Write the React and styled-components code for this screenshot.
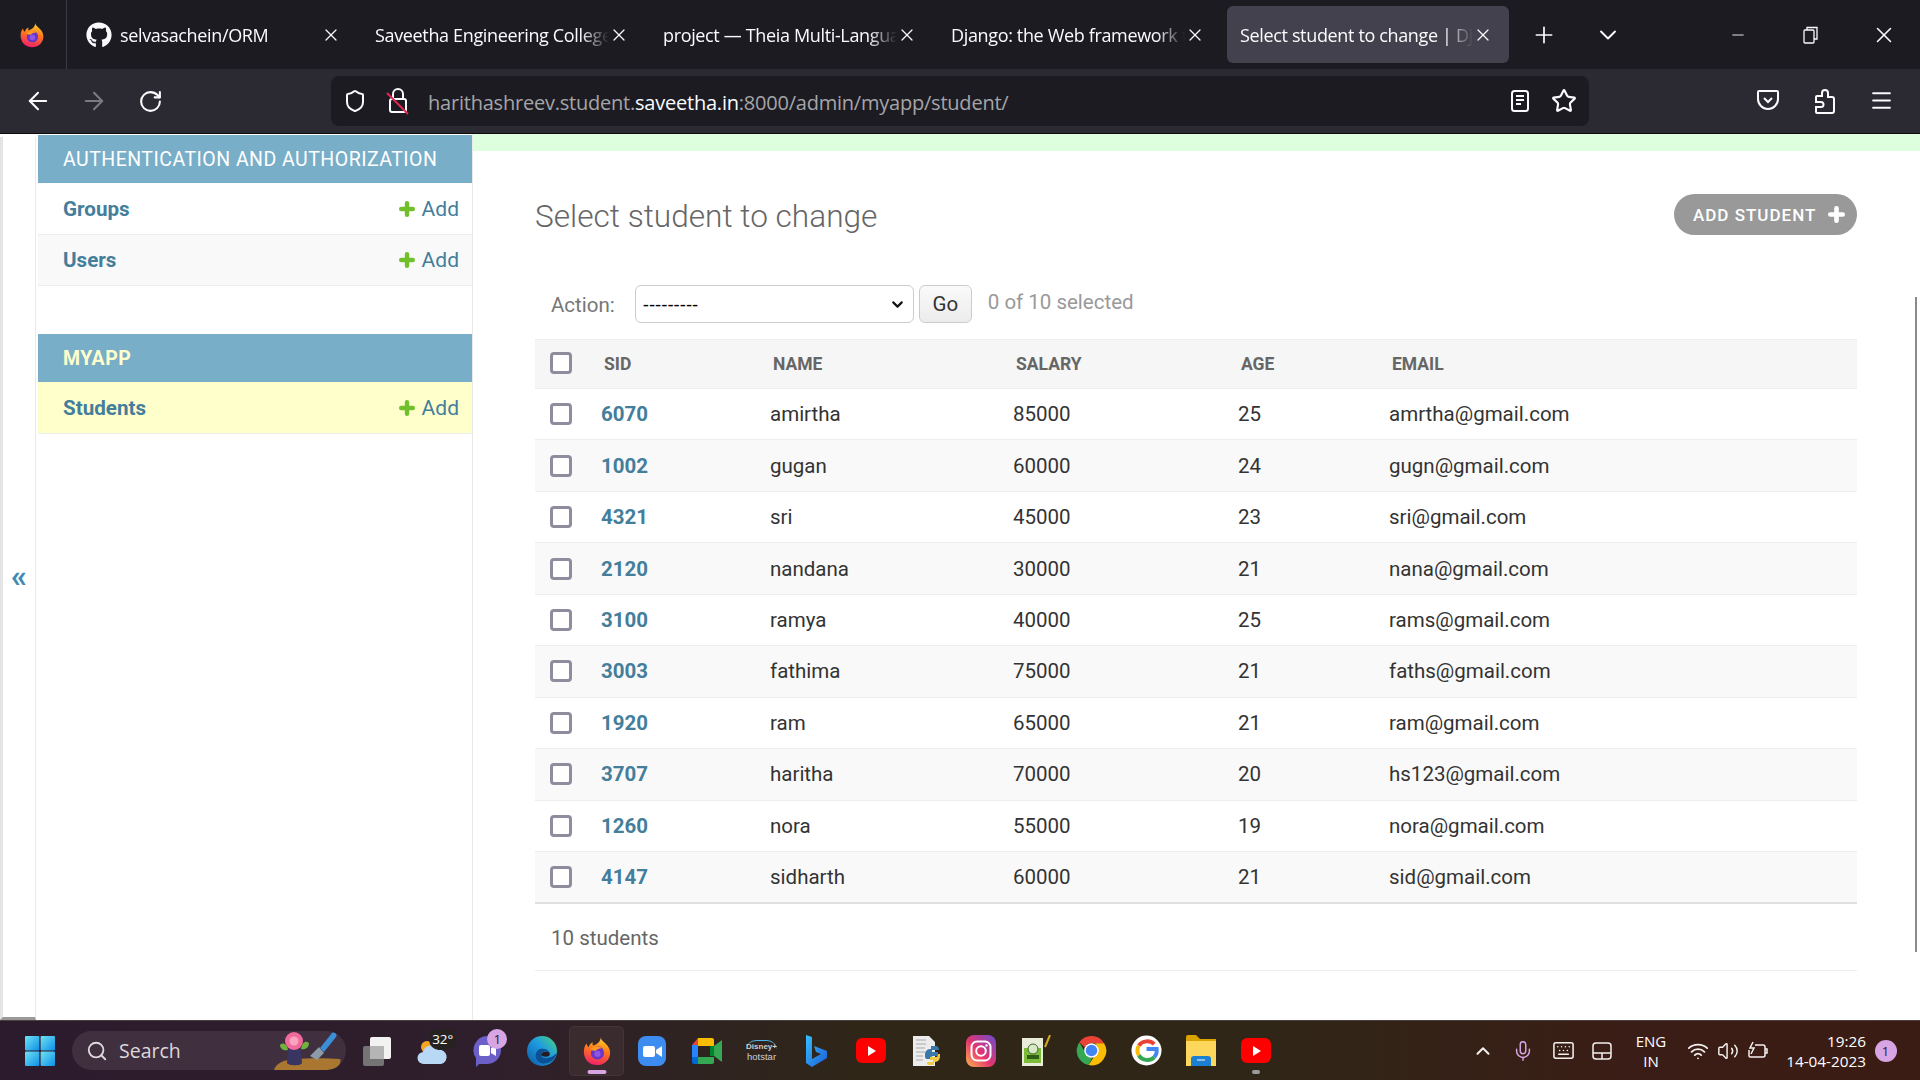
import React from 'react'
import styled, { createGlobalStyle } from 'styled-components'
import { ArrowLeft, ArrowRight, RotateCw, Shield, Star, Menu, X, Plus, ChevronDown, ChevronUp, Minus, Mic, Keyboard, Wifi, Volume2, Search } from 'lucide-react'
import { FaGithub } from 'react-icons/fa'

const students = [
  { sid: 6070, name: 'amirtha', salary: 85000, age: 25, email: 'amrtha@gmail.com' },
  { sid: 1002, name: 'gugan', salary: 60000, age: 24, email: 'gugn@gmail.com' },
  { sid: 4321, name: 'sri', salary: 45000, age: 23, email: 'sri@gmail.com' },
  { sid: 2120, name: 'nandana', salary: 30000, age: 21, email: 'nana@gmail.com' },
  { sid: 3100, name: 'ramya', salary: 40000, age: 25, email: 'rams@gmail.com' },
  { sid: 3003, name: 'fathima', salary: 75000, age: 21, email: 'faths@gmail.com' },
  { sid: 1920, name: 'ram', salary: 65000, age: 21, email: 'ram@gmail.com' },
  { sid: 3707, name: 'haritha', salary: 70000, age: 20, email: 'hs123@gmail.com' },
  { sid: 1260, name: 'nora', salary: 55000, age: 19, email: 'nora@gmail.com' },
  { sid: 4147, name: 'sidharth', salary: 60000, age: 21, email: 'sid@gmail.com' },
]

const tabs = [
  { title: 'selvasachein/ORM', github: true },
  { title: 'Saveetha Engineering College' },
  { title: 'project — Theia Multi-Language' },
  { title: 'Django: the Web framework for' },
  { title: 'Select student to change | Django', active: true },
]

const GlobalStyle = createGlobalStyle`
  html, body { margin: 0; padding: 0; height: 100%; overflow: hidden; background: #fff; }
  * { box-sizing: border-box; }
`

const Screen = styled.div`
  width: 1920px;
  height: 1080px;
  display: flex;
  flex-direction: column;
  font-family: Roboto, "Liberation Sans", sans-serif;
  position: relative;
  overflow: hidden;
`

/* browser chrome */
const TabStrip = styled.div`
  height: 69px;
  background: #1c1b22;
  display: flex;
  align-items: center;
  color: #fbfbfe;
  font-family: "Open Sans", "Noto Sans", sans-serif;
`
const BrowserLogo = styled.div`
  width: 67px;
  height: 69px;
  display: flex;
  align-items: center;
  justify-content: center;
  border-right: 1px solid #3a3944;
  padding-right: 3px;
  margin-right: 8px;
`
const Tab = styled.div`
  width: 282px;
  height: 57px;
  margin-right: 6px;
  border-radius: 6px;
  display: flex;
  align-items: center;
  padding: 0 16px 0 ${p => (p.$github ? 11 : p.$active ? 13 : 12)}px;
  background: ${p => (p.$active ? '#42414d' : 'transparent')};
  svg { flex: none; }
`
const TabTitle = styled.span`
  flex: 1;
  min-width: 0;
  white-space: nowrap;
  overflow: hidden;
  font-size: 18px;
  letter-spacing: -0.35px;
  margin-left: ${p => (p.$github ? 8 : 0)}px;
  -webkit-mask-image: linear-gradient(to right, #000 88%, transparent 100%);
  mask-image: linear-gradient(to right, #000 88%, transparent 100%);
`
const StripButton = styled.div`
  width: 40px;
  display: flex;
  justify-content: center;
  margin-left: ${p => p.$gap}px;
`
const WindowControls = styled.div`
  margin-left: auto;
  display: flex;
  align-items: center;
`
const WindowButton = styled.div`
  width: 73px;
  display: flex;
  align-items: center;
  justify-content: center;
`
const Toolbar = styled.div`
  height: 65px;
  background: #2b2a33;
  border-bottom: 1px solid #0c0c0d;
  display: flex;
  align-items: center;
  padding: 0 10px;
  color: #fbfbfe;
`
const NavButton = styled.div`
  width: 56px;
  display: flex;
  justify-content: center;
  color: ${p => (p.$dim ? '#7b7a80' : '#fbfbfe')};
`
const UrlBar = styled.div`
  width: 1258px;
  height: 50px;
  margin-left: 153px;
  background: #1c1b22;
  border-radius: 8px;
  display: flex;
  align-items: center;
  padding: 0 12px;
`
const LockSlot = styled.div`
  margin-left: 19px;
  display: flex;
`
const UrlText = styled.div`
  margin: 2px 0 0 18px;
  font-family: "Open Sans", "Noto Sans", sans-serif;
  font-size: 20px;
  letter-spacing: -0.22px;
  color: #a5a5a9;
  white-space: nowrap;
  b { font-weight: 400; color: #fbfbfe; }
`
const UrlIcons = styled.div`
  margin-left: auto;
  display: flex;
  align-items: center;
  gap: 21px;
`
const ToolbarRight = styled.div`
  margin-left: auto;
  display: flex;
`
const ToolButton = styled.div`
  width: 57px;
  display: flex;
  justify-content: center;
`

/* page */
const Content = styled.div`
  flex: 1;
  min-height: 0;
  display: flex;
  background: #fff;
  position: relative;
`
const NavToggle = styled.div`
  width: 36px;
  margin-top: 3px;
  border-left: 3px solid #e4e4e4;
  border-right: 1px solid #eaeaea;
  border-bottom: 3px solid #999;
  display: flex;
  align-items: center;
  justify-content: center;
  color: #4289b5;
  font-size: 32px;
  font-weight: 700;
  line-height: 1;
  padding-bottom: 2px;
`
const Sidebar = styled.nav`
  width: 437px;
  padding: 1px 0 0 2px;
  border-right: 1px solid #eaeaea;
`
const AppGroup = styled.section`
  margin-bottom: 48px;
`
const AppHeader = styled.div`
  height: 48px;
  background: #79aec8;
  display: flex;
  align-items: center;
  padding-left: 25px;
  font-size: 19.5px;
  letter-spacing: 0.48px;
  color: ${p => (p.$current ? '#ffc' : '#fff')};
  font-weight: ${p => (p.$current ? 700 : 400)};
  text-transform: uppercase;
`
const ModelRow = styled.div`
  height: 51.5px;
  display: flex;
  align-items: center;
  justify-content: space-between;
  padding: 1px 13px 0 25px;
  border-bottom: 1px solid #eee;
  background: ${p => (p.$current ? '#ffc' : p.$alt ? '#f9f9f9' : '#fff')};
  color: #447e9b;
  font-size: 20.6px;
`
const ModelName = styled.a`
  font-weight: 700;
`
const AddLink = styled.a`
  display: flex;
  align-items: center;
  gap: 7px;
  font-size: 21px;
`
const Main = styled.main`
  flex: 1;
  min-width: 0;
  display: flex;
  flex-direction: column;
`
const Messages = styled.div`
  height: 17px;
  background: #dfd;
`
const ChangeList = styled.div`
  padding: 43px 63px 0 62px;
`
const TitleRow = styled.div`
  display: flex;
  align-items: center;
  justify-content: space-between;
  height: 41px;
`
const Title = styled.h1`
  margin: 4px 0 0;
  font-size: 31.6px;
  font-weight: 300;
  color: #666;
`
const AddButton = styled.a`
  width: 183px;
  height: 41px;
  border-radius: 21px;
  background: #999;
  color: #fff;
  display: flex;
  align-items: center;
  gap: 12px;
  padding-left: 19px;
  font-size: 17px;
  font-weight: 500;
  letter-spacing: 1px;
  text-transform: uppercase;
`
const Actions = styled.div`
  display: flex;
  align-items: center;
  height: 38px;
  margin-top: 50px;
  padding-left: 16px;
  color: #999;
  font-size: 20.5px;
`
const ActionLabel = styled.label`
  color: #777;
  margin: 2px 20px 0 0;
`
const SelectWrap = styled.div`
  position: relative;
  width: 279px;
  height: 38px;
  svg { position: absolute; right: 8px; top: 11px; pointer-events: none; }
`
const ActionSelect = styled.select`
  appearance: none;
  display: block;
  width: 100%;
  height: 100%;
  font-family: "Liberation Sans", sans-serif;
  font-size: 18.5px;
  color: #000;
  background: #fff;
  border: 1px solid #ccc;
  border-radius: 6px;
  padding-left: 7px;
`
const GoButton = styled.button`
  width: 53px;
  height: 38px;
  margin: 0 16px 0 5px;
  font: 400 20.5px Roboto, sans-serif;
  color: #333;
  background: linear-gradient(#fafafa, #ececec);
  border: 1px solid #ccc;
  border-radius: 6px;
  padding: 0;
`
const Counter = styled.span`
  margin-top: -4px;
`
const Results = styled.table`
  width: 1322px;
  margin-top: 16px;
  border-collapse: collapse;
  table-layout: fixed;
  font-size: 20.5px;
  color: #333;
`
const HeadCell = styled.th`
  height: 49px;
  padding: 0 0 0 18px;
  background: #f6f6f6;
  border-top: 1px solid #eee;
  border-bottom: 1px solid #eee;
  text-align: left;
  font-size: 17.5px;
  font-weight: 700;
  color: #666;
  text-transform: uppercase;
`
const Row = styled.tr`
  background: ${p => (p.$alt ? '#f9f9f9' : '#fff')};
  &:last-child td { border-bottom: 2px solid #e0e0e0; }
`
const Cell = styled.td`
  height: 51.45px;
  padding: 0 0 0 15px;
  border-bottom: 1px solid #eee;
`
const CheckCell = styled(Cell)`
  padding: 0 0 0 15px;
`
const CheckHead = styled(HeadCell)`
  padding: 0 0 2px 15px;
`
const SidLink = styled.a`
  color: #447e9b;
  font-weight: 700;
`
const Check = styled.input.attrs({ type: 'checkbox' })`
  appearance: none;
  display: block;
  width: 22px;
  height: 22px;
  margin: 0;
  background: #fff;
  border: 3px solid #8f8c9e;
  border-radius: 4px;
`
const Paginator = styled.div`
  height: 67px;
  display: flex;
  align-items: center;
  padding: 2px 0 0 16px;
  font-size: 20.5px;
  color: #666;
  border-bottom: 1px solid #eee;
`
const Scrollbar = styled.div`
  position: absolute;
  right: 3px;
  top: 163px;
  width: 2px;
  height: 655px;
  background: #8a8a8a;
`

/* taskbar */
const Taskbar = styled.div`
  height: 60px;
  flex: none;
  display: flex;
  align-items: center;
  border-top: 1px solid #4a4040;
  background: linear-gradient(to right, #2b1b2d 0%, #2f1f2c 25%, #2f2618 45%, #2f2618 65%, #3a1d16 85%, #3b1c15 100%);
  color: #fff;
  font-family: "Open Sans", "Noto Sans", sans-serif;
`
const StartButton = styled.div`
  width: 72px;
  padding-left: 8px;
  display: flex;
  justify-content: center;
`
const SearchBox = styled.div`
  width: 274px;
  height: 39px;
  border-radius: 20px;
  background: #402f3f;
  display: flex;
  align-items: center;
  padding-left: 14px;
  color: #dcd8dc;
  font-size: 19.5px;
  overflow: hidden;
  position: relative;
`
const SearchLabel = styled.span`
  margin-left: 11px;
`
const SearchArt = styled.div`
  position: absolute;
  right: 2px;
  top: 0;
`
const Dock = styled.div`
  display: flex;
  margin-left: 3.5px;
`
const DockItem = styled.div`
  width: 54.95px;
  height: 50px;
  display: flex;
  align-items: center;
  justify-content: center;
  position: relative;
  border-radius: 5px;
  background: ${p => (p.$active ? '#3a2c2e' : 'transparent')};
  box-shadow: ${p => (p.$active ? 'inset 0 0 0 1px rgba(255,255,255,0.05)' : 'none')};
`
const Indicator = styled.span`
  position: absolute;
  bottom: 2px;
  left: 50%;
  transform: translateX(-50%);
  height: 4px;
  border-radius: 2px;
  width: ${p => (p.$wide ? 19 : 8)}px;
  background: ${p => (p.$wide ? '#d8a5e4' : '#9b9b9b')};
`
const IconBadge = styled.span`
  position: absolute;
  top: ${p => p.$top}px;
  right: ${p => p.$right}px;
  min-width: 20px;
  height: ${p => p.$h}px;
  padding: 0 3px;
  border-radius: 11px;
  background: ${p => p.$bg};
  color: ${p => p.$color};
  font-size: 13.5px;
  line-height: ${p => p.$h}px;
  text-align: center;
`
const HotstarMark = styled.div`
  display: flex;
  flex-direction: column;
  align-items: center;
  color: #cfcfcf;
  line-height: 1;
  font-family: "Liberation Sans", sans-serif;
`
const HotstarTop = styled.span`
  font-size: 8px;
  font-weight: 700;
  border-top: 1px solid #4bb5e8;
  border-radius: 10px 10px 0 0;
  padding-top: 2px;
`
const HotstarName = styled.span`
  font-size: 9.5px;
  margin-top: 1px;
`
const Tray = styled.div`
  margin-left: auto;
  display: flex;
  align-items: center;
  padding-right: 23.5px;
`
const TrayIcon = styled.div`
  width: ${p => p.$w}px;
  display: flex;
  justify-content: center;
  color: ${p => p.$color || '#f4f0ee'};
`
const Lang = styled.div`
  width: 58px;
  text-align: center;
  font-size: 15px;
  line-height: 20px;
  margin: 0 3px 0 1px;
`
const Clock = styled.div`
  width: 95px;
  margin-left: -2px;
  text-align: right;
  font-size: 15.3px;
  line-height: 20px;
  white-space: nowrap;
`
const NotifyDot = styled.div`
  width: 22px;
  height: 22px;
  margin-left: 8.5px;
  border-radius: 50%;
  background: #d8a5e4;
  color: #2b1b1b;
  font-size: 13px;
  line-height: 22px;
  text-align: center;
`

function FirefoxIcon({ size = 26 }) {
  const id = `ff${size}`
  return (
    <svg width={size} height={size} viewBox="0 0 32 32">
      <defs>
        <linearGradient id={id} x1="0.65" y1="0" x2="0.4" y2="1">
          <stop offset="0" stopColor="#ffd52b" />
          <stop offset="0.45" stopColor="#ff7a1a" />
          <stop offset="1" stopColor="#f01f6a" />
        </linearGradient>
      </defs>
      <path d="M20 1c0 4 4 5 6 8 2 2 4 5 4 9 0 7-6 13-14 13S2 25 2 17c0-4 1-7 3-9 0 2 1 3 2 4 1-3 3-5 5-5-1 1-1 3 0 3 4-1 8-4 8-9z" fill={`url(#${id})`} />
      <circle cx="16.5" cy="18" r="7" fill="#6a34c7" />
      <path d="M9 14c3-4 9-4 12-1-3 0-5 1-6 2.500-2 .5-4 0-6-1.500z" fill="#ff9a1f" />
      <circle cx="16.500" cy="19" r="3.400" fill="#8f55e6" />
    </svg>
  )
}

function LockOff() {
  return (
    <svg width="24" height="28" viewBox="0 0 24 28" fill="none">
      <rect x="4" y="12" width="16" height="13" rx="2" stroke="#fbfbfe" strokeWidth="2" />
      <path d="M7 12V7a5 5 0 0 1 10 0v5" stroke="#fbfbfe" strokeWidth="2" />
      <path d="M1 6l21 21" stroke="#e22850" strokeWidth="2" />
    </svg>
  )
}

function ReaderIcon() {
  return (
    <svg width="20" height="24" viewBox="0 0 20 24" fill="none" stroke="#fbfbfe" strokeWidth="2">
      <rect x="2" y="2" width="16" height="20" rx="2.5" />
      <path d="M6 7h8M6 11h8M6 15h5" />
    </svg>
  )
}

function PocketIcon() {
  return (
    <svg width="24" height="24" viewBox="0 0 24 24" fill="none" stroke="#fbfbfe" strokeWidth="2">
      <path d="M3 3h18a1 1 0 0 1 1 1v7a10 10 0 0 1-20 0V4a1 1 0 0 1 1-1z" />
      <path d="M8 10l4 4 4-4" />
    </svg>
  )
}

function ExtensionIcon() {
  return (
    <svg width="24" height="27" viewBox="0 0 24 27" fill="none" stroke="#fbfbfe" strokeWidth="2">
      <path d="M4 25h15a2 2 0 0 0 2-2V11a2 2 0 0 0-2-2h-4V5a3 3 0 0 0-6 0v3H4a1 1 0 0 0-1 1v5h5a1.500 1.500 0 0 1 0 5H3v5a1 1 0 0 0 1 1z" />
    </svg>
  )
}

function RestoreIcon() {
  return (
    <svg width="16" height="18" viewBox="0 0 16 18" fill="none" stroke="#fbfbfe" strokeWidth="1.3">
      <rect x="1" y="4" width="10" height="13" rx="1" />
      <path d="M4 4V1.500h10V13h-3" />
    </svg>
  )
}

function PlusMark({ color, size = 16 }) {
  return (
    <svg width={size} height={size} viewBox="0 0 16 16">
      <path d="M8 2.200v11.600M2.200 8h11.600" stroke={color} strokeWidth="4.400" strokeLinecap="round" />
    </svg>
  )
}

function StartIcon() {
  return (
    <svg width="30" height="30" viewBox="0 0 30 30">
      <defs>
        <linearGradient id="win" x1="0" y1="0" x2="1" y2="1">
          <stop offset="0" stopColor="#6fe3f2" />
          <stop offset="1" stopColor="#0e8fe8" />
        </linearGradient>
      </defs>
      <rect x="0" y="0" width="14.400" height="14.400" rx="1" fill="url(#win)" />
      <rect x="15.600" y="0" width="14.400" height="14.400" rx="1" fill="url(#win)" />
      <rect x="0" y="15.600" width="14.400" height="14.400" rx="1" fill="url(#win)" />
      <rect x="15.600" y="15.600" width="14.400" height="14.400" rx="1" fill="url(#win)" />
    </svg>
  )
}

function SearchDecor() {
  return (
    <svg width="72" height="39" viewBox="0 0 72 39">
      <path d="M2 39c2-7 10-10 20-11 14-1 34-1 46 0 2 3-2 8-6 11z" fill="#a9772f" />
      <path d="M16 18c5 0 10 0 13 0l1 14c0 3-14 3-15 0z" fill="#3a3560" />
      <path d="M8 14c3-3 7-1 8 5-4 1-8-1-8-5zM37 12c-3-3-7-1-8 6 4 1 8-1 8-6z" fill="#6fb33d" />
      <circle cx="22" cy="10" r="9" fill="#f06a9b" />
      <circle cx="22" cy="10" r="4.500" fill="#f9a3c0" />
      <path d="M38 25l9-9 5 6-7 7z" fill="#8d9ba8" />
      <path d="M48 17L60 2c2-2 6 1 4 4L52 21z" fill="#3b8fd8" />
    </svg>
  )
}

const dockIcons = {
  taskview: (
    <svg width="30" height="30" viewBox="0 0 30 30">
      <rect x="8" y="1" width="21" height="22" rx="2" fill="#f2f2f2" />
      <rect x="1" y="10" width="21" height="20" rx="2" fill="#7d7d7d" fillOpacity="0.9" />
      <rect x="8" y="10" width="14" height="13" fill="#b5b5b5" />
    </svg>
  ),
  weather: (
    <svg width="32" height="32" viewBox="0 0 32 32">
      <circle cx="11" cy="12" r="6" fill="#f5a623" />
      <path d="M8 29a6 6 0 0 1-1-12 8 8 0 0 1 15-2 7 7 0 0 1 3 14z" fill="#b9d8f5" />
    </svg>
  ),
  chat: (
    <svg width="32" height="34" viewBox="0 0 32 34">
      <path d="M16 2a14 14 0 0 1 0 28H8l-3 3v-9A14 14 0 0 1 16 2z" fill="#6c5fc7" />
      <rect x="8" y="11" width="11" height="11" rx="2" fill="#fff" />
      <path d="M20 14l5-3v11l-5-3z" fill="#fff" />
    </svg>
  ),
  edge: (
    <svg width="32" height="32" viewBox="0 0 32 32">
      <defs>
        <linearGradient id="edg" x1="0" y1="1" x2="1" y2="0">
          <stop offset="0" stopColor="#0c59a4" />
          <stop offset="0.55" stopColor="#1e9be0" />
          <stop offset="1" stopColor="#4bd67a" />
        </linearGradient>
      </defs>
      <circle cx="16" cy="16" r="15" fill="url(#edg)" />
      <path d="M31 18c-2 8-10 12-16 10-6-2-7-9-3-13 3-2 9-2 11 2-3-1-8-1-8 3 0 4 9 5 16-2z" fill="#0b4f94" />
      <path d="M15 20c0-3 4-4 8-3 1 1 1 3 0 4-3 1-6 1-8-1z" fill="#241a20" />
    </svg>
  ),
  zoom: (
    <svg width="30" height="30" viewBox="0 0 30 30">
      <rect width="28" height="30" x="1" rx="8" fill="#3d8cf0" />
      <rect x="6" y="10" width="12" height="11" rx="2" fill="#fff" />
      <path d="M19 14l6-4v11l-6-4z" fill="#fff" />
    </svg>
  ),
  meet: (
    <svg width="30" height="26" viewBox="0 0 30 26">
      <path d="M6 0h14a2 2 0 0 1 2 2v6H6z" fill="#fbbc04" />
      <path d="M0 7l6-7v7z" fill="#ea4335" />
      <path d="M0 7h6v12H0z" fill="#2684fc" />
      <path d="M0 19h6v7H2a2 2 0 0 1-2-2z" fill="#0066da" />
      <path d="M6 19h16v5a2 2 0 0 1-2 2H6z" fill="#34a853" />
      <path d="M22 8l8-6v22l-8-6z" fill="#34a853" />
      <path d="M18 8h4v10h-4z" fill="#00832d" />
    </svg>
  ),
  hotstar: (
    <HotstarMark>
      <HotstarTop>Disney+</HotstarTop>
      <HotstarName>hotstar</HotstarName>
    </HotstarMark>
  ),
  bing: (
    <svg width="24" height="34" viewBox="0 0 24 34">
      <defs>
        <linearGradient id="bng" x1="0" y1="0" x2="1" y2="1">
          <stop offset="0" stopColor="#37bdff" />
          <stop offset="1" stopColor="#1b5fd6" />
        </linearGradient>
      </defs>
      <path d="M2 1l6 2v22l9-5-5-2-2-6 13 5v7L8 33l-6-4z" fill="url(#bng)" />
    </svg>
  ),
  youtube: (
    <svg width="30" height="26" viewBox="0 0 30 26">
      <rect width="30" height="25" rx="6" fill="#f00" />
      <path d="M12 8l8 5-8 5z" fill="#fff" />
    </svg>
  ),
  pyfile: (
    <svg width="30" height="32" viewBox="0 0 30 32">
      <path d="M2 1h16l6 6v24H2z" fill="#ececec" />
      <path d="M5 5h10M5 9h10M5 13h9M5 17h9M5 21h7M5 25h7" stroke="#a8a8a8" strokeWidth="1" />
      <path d="M14 20c0-5 3-6 6-6v-3h5c2 0 3 2 3 4h-7v2h6v4h-5c-2 0-2 2-2 3h-4c-2 0-2-2-2-4z" fill="#3a77ab" />
      <path d="M29 21c0 5-3 6-6 6v3h-5c-2 0-2-2-2-3h6v-2h-3v-3h6c2 0 2-2 2-3h2z" fill="#f3c93e" />
    </svg>
  ),
  instagram: (
    <svg width="30" height="32" viewBox="0 0 30 32" fill="none">
      <defs>
        <linearGradient id="ig" x1="0" y1="1" x2="1" y2="0">
          <stop offset="0" stopColor="#fdb34d" />
          <stop offset="0.45" stopColor="#e5356f" />
          <stop offset="1" stopColor="#6a4bd1" />
        </linearGradient>
      </defs>
      <rect width="30" height="32" rx="8" fill="url(#ig)" />
      <rect x="5.500" y="6.500" width="19" height="19" rx="5.500" stroke="#fff" strokeWidth="2" />
      <circle cx="15" cy="16" r="4.800" stroke="#fff" strokeWidth="2" />
      <circle cx="20.500" cy="10.500" r="1.200" fill="#fff" />
    </svg>
  ),
  notepad: (
    <svg width="30" height="32" viewBox="0 0 30 32">
      <path d="M1 3h21v28H1z" fill="#e8ecd8" />
      <path d="M3 13h17v15H3z" fill="#7dbb3a" />
      <circle cx="12" cy="14" r="5" fill="#d9e8c8" stroke="#3c6b1f" />
      <path d="M6 20h12v4H6z" fill="#2f5f16" />
      <path d="M24 12l5-12" stroke="#d9a520" strokeWidth="2" />
    </svg>
  ),
  chrome: (
    <svg width="31" height="31" viewBox="0 0 32 32">
      <path d="M16 1a15 15 0 0 1 13 7.500H16a7.500 7.500 0 0 0-7 4.500L3.500 7.500A15 15 0 0 1 16 1z" fill="#ea4335" />
      <path d="M3.500 7.500L10 19a7.500 7.500 0 0 0 7 4l-4 8A15 15 0 0 1 3.500 7.500z" fill="#34a853" />
      <path d="M29 8.500A15 15 0 0 1 13 31l6.500-10a7.500 7.500 0 0 0 0-12.500z" fill="#fbbc04" />
      <circle cx="16" cy="16" r="7.500" fill="#fff" />
      <circle cx="16" cy="16" r="6" fill="#4285f4" />
    </svg>
  ),
  google: (
    <svg width="31" height="31" viewBox="0 0 32 32" fill="none">
      <circle cx="16" cy="16" r="15.500" fill="#fff" />
      <path d="M24 9.500A10.500 10.500 0 0 0 8 11" stroke="#ea4335" strokeWidth="4" />
      <path d="M8 11a10.500 10.500 0 0 0 0 10" stroke="#fbbc04" strokeWidth="4" />
      <path d="M8 21a10.500 10.500 0 0 0 16 2" stroke="#34a853" strokeWidth="4" />
      <path d="M24 23a10.500 10.500 0 0 0 2.500-8.500H16" stroke="#4285f4" strokeWidth="4" />
    </svg>
  ),
  folder: (
    <svg width="30" height="31" viewBox="0 0 30 31">
      <path d="M0 2a2 2 0 0 1 2-2h8l4 4h16v5H0z" fill="#d9a300" />
      <path d="M0 6h30v25H0z" fill="#fdd75c" />
      <path d="M5 24a3 3 0 0 1 3-3h14a3 3 0 0 1 3 3v7H5z" fill="#1d7fd1" />
      <path d="M11 25h8" stroke="#fff" strokeWidth="1" />
    </svg>
  ),
}

function WifiAndSound() {
  return (
    <>
      <TrayIcon $w={30}><Wifi size={22} strokeWidth={2} /></TrayIcon>
      <TrayIcon $w={30}><Volume2 size={22} strokeWidth={1.600} /></TrayIcon>
      <TrayIcon $w={30}>
        <svg width="22" height="20" viewBox="0 0 22 20" fill="none" stroke="#f4f0ee" strokeWidth="1.500">
          <path d="M8 4h8a2 2 0 0 1 2 2v8a2 2 0 0 1-2 2H3a2 2 0 0 1-1-1V9" />
          <path d="M18 8h2v4h-2M6 1L3 7h4l-3 6" />
        </svg>
      </TrayIcon>
    </>
  )
}

export default function App() {
  const dock = ['taskview', 'weather', 'chat', 'edge', 'firefox', 'zoom', 'meet', 'hotstar', 'bing', 'youtube', 'pyfile', 'instagram', 'notepad', 'chrome', 'google', 'folder', 'youtube2']

  return (
    <Screen>
      <GlobalStyle />
      <TabStrip>
        <BrowserLogo><FirefoxIcon /></BrowserLogo>
        {tabs.map(tab => (
          <Tab key={tab.title} $active={tab.active} $github={tab.github}>
            {tab.github && <FaGithub size={26} color="#fbfbfe" />}
            <TabTitle $github={tab.github}>{tab.title}</TabTitle>
            <X size={20} strokeWidth={1.500} />
          </Tab>
        ))}
        <StripButton $gap={9}><Plus size={26} strokeWidth={1.600} /></StripButton>
        <StripButton $gap={24}><ChevronDown size={28} strokeWidth={1.600} /></StripButton>
        <WindowControls>
          <WindowButton><Minus size={18} strokeWidth={1.200} /></WindowButton>
          <WindowButton><RestoreIcon /></WindowButton>
          <WindowButton><X size={26} strokeWidth={1.400} /></WindowButton>
        </WindowControls>
      </TabStrip>

      <Toolbar>
        <NavButton><ArrowLeft size={28} strokeWidth={1.800} /></NavButton>
        <NavButton $dim><ArrowRight size={28} strokeWidth={1.800} /></NavButton>
        <NavButton><RotateCw size={25} strokeWidth={2} /></NavButton>
        <UrlBar>
          <Shield size={24} strokeWidth={2} />
          <LockSlot><LockOff /></LockSlot>
          <UrlText>harithashreev.student.<b>saveetha.in</b>:8000/admin/myapp/student/</UrlText>
          <UrlIcons>
            <ReaderIcon />
            <Star size={26} strokeWidth={2} />
          </UrlIcons>
        </UrlBar>
        <ToolbarRight>
          <ToolButton><PocketIcon /></ToolButton>
          <ToolButton><ExtensionIcon /></ToolButton>
          <ToolButton><Menu size={25} strokeWidth={2} /></ToolButton>
        </ToolbarRight>
      </Toolbar>

      <Content>
        <NavToggle>«</NavToggle>
        <Sidebar>
          <AppGroup>
            <AppHeader>Authentication and Authorization</AppHeader>
            <ModelRow>
              <ModelName>Groups</ModelName>
              <AddLink><PlusMark color="#70bf2b" />Add</AddLink>
            </ModelRow>
            <ModelRow $alt>
              <ModelName>Users</ModelName>
              <AddLink><PlusMark color="#70bf2b" />Add</AddLink>
            </ModelRow>
          </AppGroup>
          <AppGroup>
            <AppHeader $current>Myapp</AppHeader>
            <ModelRow $current>
              <ModelName>Students</ModelName>
              <AddLink><PlusMark color="#70bf2b" />Add</AddLink>
            </ModelRow>
          </AppGroup>
        </Sidebar>
        <Main>
          <Messages />
          <ChangeList>
            <TitleRow>
              <Title>Select student to change</Title>
              <AddButton>Add student<PlusMark color="#fff" size={17} /></AddButton>
            </TitleRow>
            <Actions>
              <ActionLabel>Action:</ActionLabel>
              <SelectWrap>
                <ActionSelect defaultValue="">
                  <option value="">---------</option>
                  <option value="delete">Delete selected students</option>
                </ActionSelect>
                <ChevronDown size={17} strokeWidth={3} color="#111" />
              </SelectWrap>
              <GoButton>Go</GoButton>
              <Counter>0 of 10 selected</Counter>
            </Actions>
            <Results>
              <colgroup>
                <col style={{ width: 51 }} />
                <col style={{ width: 169 }} />
                <col style={{ width: 243 }} />
                <col style={{ width: 225 }} />
                <col style={{ width: 151 }} />
                <col />
              </colgroup>
              <thead>
                <tr>
                  <CheckHead><Check /></CheckHead>
                  <HeadCell>SID</HeadCell>
                  <HeadCell>Name</HeadCell>
                  <HeadCell>Salary</HeadCell>
                  <HeadCell>Age</HeadCell>
                  <HeadCell>Email</HeadCell>
                </tr>
              </thead>
              <tbody>
                {students.map((s, i) => (
                  <Row key={s.sid} $alt={i % 2 === 1}>
                    <CheckCell><Check /></CheckCell>
                    <Cell><SidLink>{s.sid}</SidLink></Cell>
                    <Cell>{s.name}</Cell>
                    <Cell>{s.salary}</Cell>
                    <Cell>{s.age}</Cell>
                    <Cell>{s.email}</Cell>
                  </Row>
                ))}
              </tbody>
            </Results>
            <Paginator>10 students</Paginator>
          </ChangeList>
        </Main>
        <Scrollbar />
      </Content>

      <Taskbar>
        <StartButton><StartIcon /></StartButton>
        <SearchBox>
          <Search size={22} strokeWidth={2} />
          <SearchLabel>Search</SearchLabel>
          <SearchArt><SearchDecor /></SearchArt>
        </SearchBox>
        <Dock>
          {dock.map(name => (
            <DockItem key={name} $active={name === 'firefox'}>
              {name === 'firefox' ? <FirefoxIcon size={30} /> : dockIcons[name.replace('2', '')]}
              {name === 'weather' && <IconBadge $top={3} $right={3} $h={21} $bg="#26221f" $color="#fff">32°</IconBadge>}
              {name === 'chat' && <IconBadge $top={3} $right={7} $h={20} $bg="#d8a5e4" $color="#2b1b1b">1</IconBadge>}
              {name === 'firefox' && <Indicator $wide />}
              {name === 'youtube2' && <Indicator />}
            </DockItem>
          ))}
        </Dock>
        <Tray>
          <TrayIcon $w={40}><ChevronUp size={22} strokeWidth={2.200} /></TrayIcon>
          <TrayIcon $w={40} $color="#d8a5e4"><Mic size={22} strokeWidth={1.600} /></TrayIcon>
          <TrayIcon $w={40}><Keyboard size={23} strokeWidth={1.600} /></TrayIcon>
          <TrayIcon $w={38}>
            <svg width="20" height="20" viewBox="0 0 20 20" fill="none" stroke="#f4f0ee" strokeWidth="1.500">
              <rect x="1" y="2" width="18" height="16" rx="3" />
              <path d="M1 12h18M10 12v6" />
            </svg>
          </TrayIcon>
          <Lang>ENG<br />IN</Lang>
          <WifiAndSound />
          <Clock>19:26<br />14-04-2023</Clock>
          <NotifyDot>1</NotifyDot>
        </Tray>
      </Taskbar>
    </Screen>
  )
}
